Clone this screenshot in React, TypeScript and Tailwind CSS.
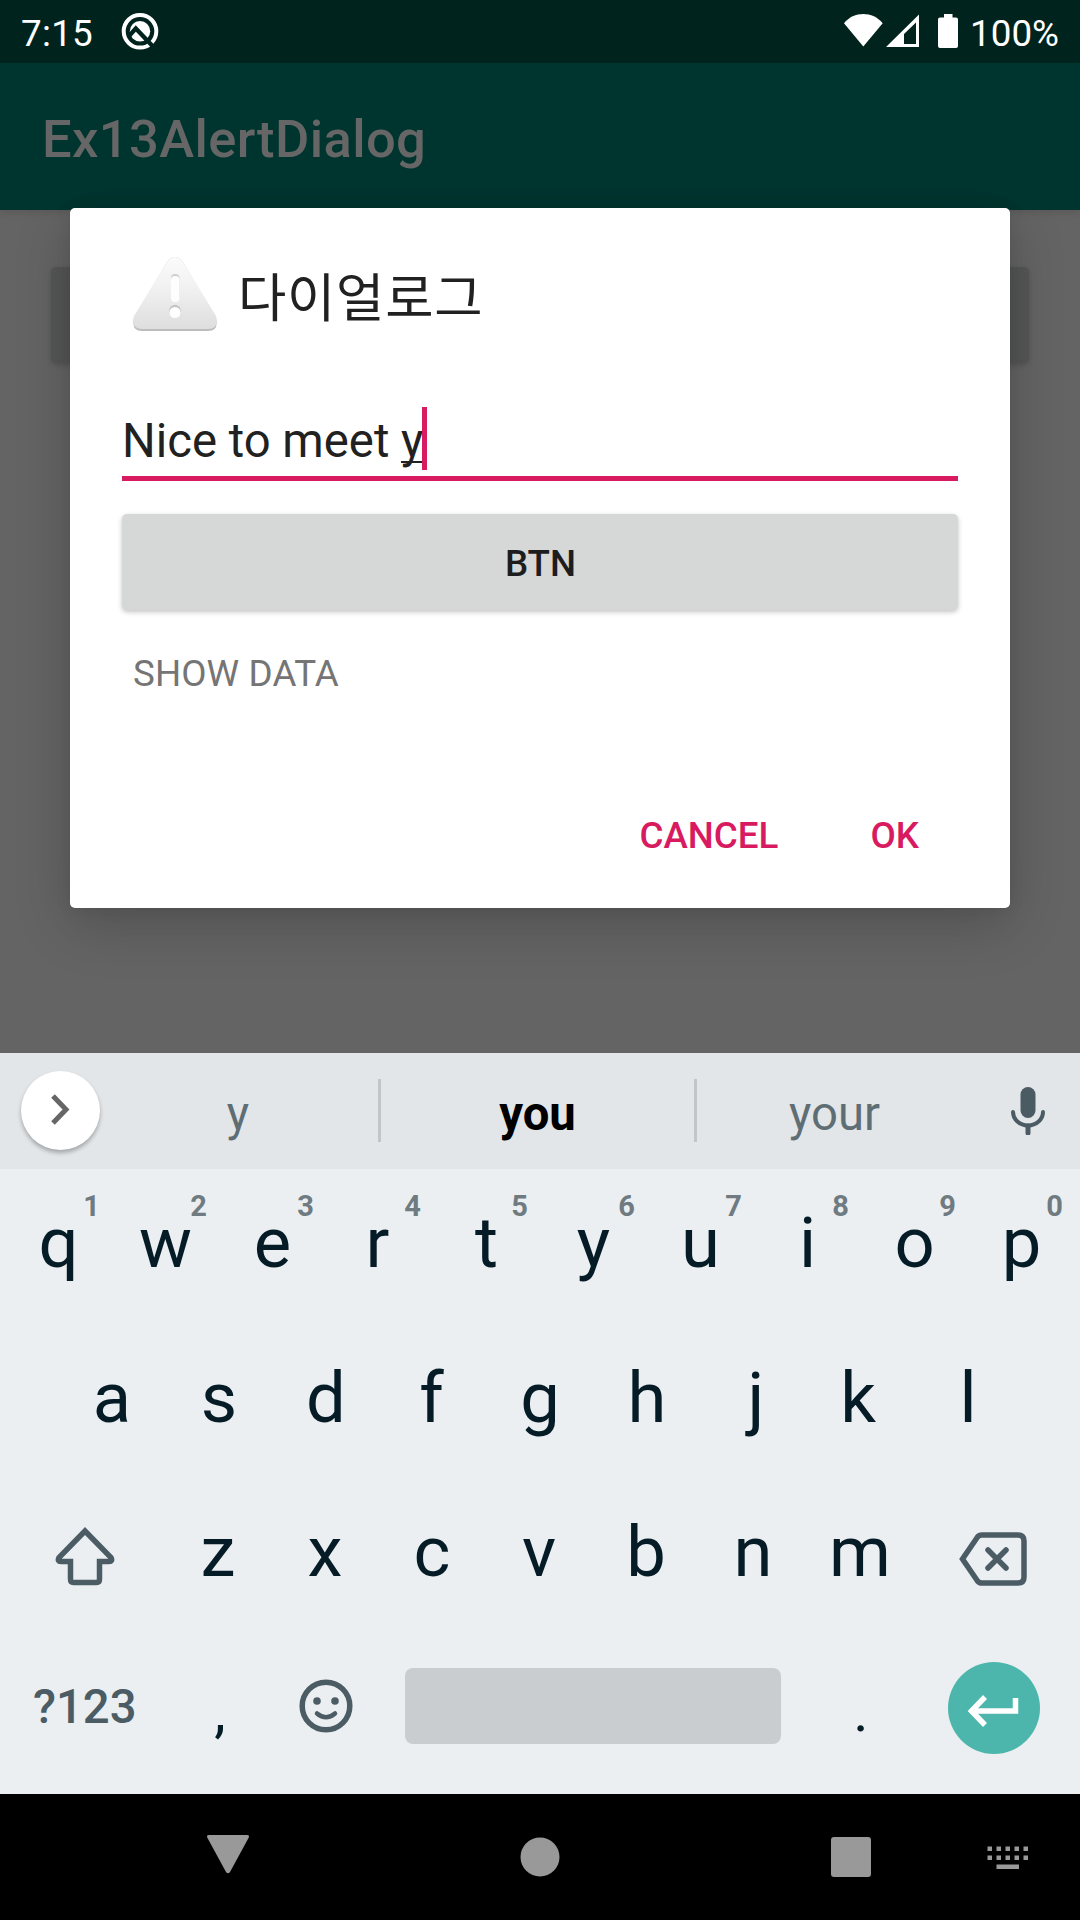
import React from "react";

const row1 = ["q", "w", "e", "r", "t", "y", "u", "i", "o", "p"];
const row2 = ["a", "s", "d", "f", "g", "h", "j", "k", "l"];
const row3 = ["z", "x", "c", "v", "b", "n", "m"];

const nudges: Record<string, string> = {
  r: "pr-[4px]",
  f: "pr-[3px]",
  j: "pl-[4px]",
  k: "pr-[6px]",
  ",": "pl-[4px]",
  ".": "pl-[2px]",
};

function Key({ label, hint, punctuation }: { label: string; hint?: string; punctuation?: boolean }) {
  return (
    <button
      className={`relative h-full w-[107px] text-center text-[#051c26] ${
        punctuation ? "text-[58px] leading-[157px]" : "text-[70.5px] leading-[148px]"
      } ${nudges[label] ?? ""}`}
    >
      <span className="block h-full">{label}</span>
      {hint && (
        <span className="absolute right-[12px] top-[19px] text-[29px] leading-[36px] font-bold text-[#6f7b80]">{hint}</span>
      )}
    </button>
  );
}

function StatusBar() {
  return (
    <header className="flex h-[63px] items-start justify-between bg-[#00231e] px-[21px] text-[36.75px] leading-[67px] text-white">
      <div className="flex items-start">
        <span className="w-[72px] tracking-[0.3px]">7:15</span>
        <svg className="ml-[28px] mt-[13px]" width="38" height="38" viewBox="0 0 38 38" fill="none">
          <circle cx="19" cy="18.3" r="16.300" stroke="white" strokeWidth="4" />
          <circle cx="19" cy="18.3" r="10.200" fill="white" />
          <path d="M8 23L14.800 15.500L31.500 33" stroke="#00231e" strokeWidth="4.300" />
        </svg>
      </div>
      <div className="flex items-start">
        <svg className="mt-[13px]" width="116" height="36" viewBox="0 0 116 36" fill="white">
          <path d="M1 10.300C6 4 13 1 20.300 1S34.600 4 39.700 10.300L20.300 33.600Z" />
          <path fillRule="evenodd" d="M43 34L76 1.500V34ZM61 31H73V9.500L61 21Z" />
          <path d="M101 1h8.500v3.500H113a2 2 0 0 1 2 2V33a2 2 0 0 1-2 2H97a2 2 0 0 1-2-2V6.500a2 2 0 0 1 2-2h4Z" />
        </svg>
        <span className="ml-[11px]">100%</span>
      </div>
    </header>
  );
}

function WarningIcon() {
  return (
    <svg width="84" height="84" viewBox="0 0 84 84">
      <defs>
        <linearGradient id="warn" x1="0" y1="0" x2="0" y2="1">
          <stop offset="0" stopColor="#fbfbfb" />
          <stop offset="0.4" stopColor="#f2f2f2" />
          <stop offset="1" stopColor="#dedede" />
        </linearGradient>
      </defs>
      <path d="M34 10Q42 0 50 10L83 66Q86 79 75 79H9Q-2 79 1 66Z" fill="#bdbdbd" />
      <path d="M34 10Q42 0 50 10L83 64Q86 77 75 77H9Q-2 77 1 64Z" fill="url(#warn)" />
      <rect x="38" y="22" width="8.500" height="27" rx="4" fill="#cfcfcf" />
      <rect x="38" y="24" width="8.500" height="26" rx="4" fill="#fdfdfd" />
      <circle cx="42" cy="58.500" r="5.800" fill="#c4c4c4" />
      <circle cx="42" cy="60.500" r="5.500" fill="#ffffff" />
    </svg>
  );
}

function AlertDialog() {
  return (
    <section className="flex h-[700px] w-[940px] flex-col rounded-[5px] bg-white px-[52px] pt-[44px] shadow-[0_16px_56px_rgba(0,0,0,0.2),0_0_16px_rgba(0,0,0,0.08)]">
      <div className="flex h-[84px] items-center gap-[21px] pl-[11px]">
        <WarningIcon />
        <h2 className="font-['Noto_Sans_CJK_KR',sans-serif] text-[52.5px] leading-[84px] tracking-[0.75px] text-[#212121]">
          다이얼로그
        </h2>
      </div>
      <div className="mt-[71px] flex h-[74px] items-start border-b-[5px] border-[#d81b60] text-[47.25px] leading-[69px] text-[#212121]">
        <span className="whitespace-pre">Nice to meet </span>
        <span className="h-[56px] border-b-[2px] border-[#212121]">y</span>
        <span className="-ml-px h-[63px] w-[5px] bg-[#d81b60]" />
      </div>
      <button className="mt-[33px] h-[96px] rounded-[5px] bg-[#d6d7d7] pl-[1px] pt-[3px] text-[36.75px] font-medium text-[#1d1d1d] shadow-[0_2px_5px_rgba(0,0,0,0.24)]">
        BTN
      </button>
      <p className="mt-[42px] pl-[11px] text-[36.75px] leading-[44px] tracking-[0.1px] text-[#757575]">SHOW DATA</p>
      <div className="mt-[118px] flex justify-end gap-[92px] pr-[39px] text-[36.75px] leading-[44px] font-medium text-[#d81b60]">
        <button>CANCEL</button>
        <button>OK</button>
      </div>
    </section>
  );
}

function SuggestionBar() {
  return (
    <div className="flex h-[116px] items-center bg-[#e2e6e9] pb-[2px] text-[47.25px] text-[#5f6d74]">
      <button className="ml-[21px] flex h-[79px] w-[79px] items-center justify-center rounded-full bg-white pl-[2px] shadow-[0_3px_4px_rgba(0,0,0,0.28)]">
        <svg width="30" height="40" viewBox="0 0 30 40" fill="none" stroke="#666" strokeWidth="5">
          <path d="M6 6L19 19.500L6 33" />
        </svg>
      </button>
      <span className="w-[278px] pr-[2px] pt-[8px] text-center">y</span>
      <span className="h-[63px] w-[3px] bg-[#c1c6c9]" />
      <span className="w-[313px] pt-[8px] text-center font-bold text-black">you</span>
      <span className="h-[63px] w-[3px] bg-[#c1c6c9]" />
      <span className="w-[275px] pt-[8px] text-center">your</span>
      <svg className="ml-[39px] mt-[1px]" width="34" height="48" viewBox="0 0 34 48" fill="none" stroke="#4b5b63">
        <rect x="9.500" y="0" width="15" height="31" rx="7.500" fill="#4b5b63" stroke="none" />
        <path d="M2 25a15 13.500 0 0 0 30 0" strokeWidth="4" strokeLinecap="round" />
        <path d="M17 39V46" strokeWidth="5" strokeLinecap="round" />
      </svg>
    </div>
  );
}

function Keyboard() {
  return (
    <div className="h-[741px] bg-[#ebeff2]">
      <SuggestionBar />
      <div className="flex h-[154.5px] justify-center">
        {row1.map((k, i) => (
          <Key key={k} label={k} hint={String((i + 1) % 10)} />
        ))}
      </div>
      <div className="flex h-[154.5px] justify-center">
        {row2.map((k) => (
          <Key key={k} label={k} />
        ))}
      </div>
      <div className="flex h-[154.5px] justify-center pr-[2px]">
        <button className="flex w-[160.5px] justify-center pt-[49px]">
          <svg width="60" height="60" viewBox="0 0 60 60" fill="none" stroke="#4b5c64" strokeWidth="5.500" className="ml-[1px]">
            <path d="M30 4L56 30.500Q58 34.500 54 34.500H44.500V52Q44.500 55.500 41.500 55.500H18.500Q15.500 55.500 15.500 52V34.500H6Q2 34.500 4 30.500Z" />
          </svg>
        </button>
        {row3.map((k) => (
          <Key key={k} label={k} />
        ))}
        <button className="flex w-[160.5px] justify-center pt-[54px]">
          <svg width="68" height="54" viewBox="0 0 68 54" fill="none" stroke="#4b5c64" strokeWidth="5.500" className="mr-[1px]">
            <path d="M23 3H59Q65 3 65 9V45Q65 51 59 51H23Q20 51 18.500 49L3.500 27L18.500 5Q20 3 23 3Z" />
            <path d="M29 18L47 36M47 18L29 36" strokeLinecap="round" />
          </svg>
        </button>
      </div>
      <div className="flex h-[154.5px] justify-center pr-[2px]">
        <button className="h-[149px] w-[160.5px] pl-[1px] text-center text-[47.25px] font-medium text-[#4b5c64]">?123</button>
        <Key label="," punctuation />
        <button className="flex h-[147px] w-[107px] items-center justify-center pl-[2px]">
          <svg width="54" height="54" viewBox="0 0 54 54" fill="none" stroke="#4b5c64">
            <circle cx="27" cy="27" r="23.800" strokeWidth="5.500" />
            <circle cx="18" cy="22" r="3.800" fill="#4b5c64" stroke="none" />
            <circle cx="36" cy="22" r="3.800" fill="#4b5c64" stroke="none" />
            <path d="M18 34.500Q27 42 36 34.500" strokeWidth="4.500" strokeLinecap="round" />
          </svg>
        </button>
        <div className="flex h-[147px] w-[428px] items-center justify-center">
          <button className="h-[76px] w-[376px] rounded-[8px] bg-[#c9cdd0]" />
        </div>
        <Key label="." punctuation />
        <button className="flex h-[151px] w-[160.5px] items-center justify-center">
          <svg width="92" height="92" viewBox="0 0 92 92" fill="none">
            <circle cx="46" cy="46" r="46" fill="#4db6ac" />
            <path d="M67.500 36V49H24M37 35L23.500 49L37 63" stroke="white" strokeWidth="5.500" />
          </svg>
        </button>
      </div>
    </div>
  );
}

function NavigationBar() {
  return (
    <nav className="flex h-[126px] bg-black pt-[41px]">
      <svg className="ml-[207px]" width="42" height="40" viewBox="0 0 42 40" fill="#999">
        <path d="M2 0H40Q43 0 41.500 3L23 37Q21 39.500 19 37L0.500 3Q-1 0 2 0Z" />
      </svg>
      <svg className="ml-[271px] mt-[2px]" width="40" height="40" viewBox="0 0 40 40" fill="#999">
        <circle cx="20" cy="20" r="19.500" />
      </svg>
      <span className="ml-[271px] mt-[2px] h-[40px] w-[40px] rounded-[3px] bg-[#999]" />
      <svg className="ml-[116px] mt-[11px]" width="42" height="24" viewBox="0 0 42 24" fill="#999">
        {[0, 9, 18, 27, 36].map((x) => (
          <React.Fragment key={x}>
            <rect x={x + 0.5} y="0.500" width="4.500" height="4.500" />
            <rect x={x + 0.5} y="9.500" width="4.500" height="4.500" />
          </React.Fragment>
        ))}
        <rect x="9.500" y="18.500" width="22.500" height="4.500" />
      </svg>
    </nav>
  );
}

export default function App() {
  return (
    <div className="flex h-[1920px] w-[1080px] flex-col overflow-hidden font-['Roboto',sans-serif]">
      <StatusBar />
      <main className="relative h-[990px] overflow-hidden bg-[#646464]">
        <div className="flex h-[147px] items-center bg-[#00352f] pl-[42px] pt-[4px] shadow-[0_2px_8px_rgba(0,0,0,0.12)]">
          <h1 className="text-[52.5px] leading-[62px] font-medium tracking-[0.4px] text-[#666]">Ex13AlertDialog</h1>
        </div>
        <div className="mx-[51px] mt-[57px] h-[96px] rounded-[5px] bg-[#555656] shadow-[0_2px_5px_rgba(0,0,0,0.16)]" />
        <div className="absolute inset-0 flex items-center justify-center">
          <AlertDialog />
        </div>
      </main>
      <Keyboard />
      <NavigationBar />
    </div>
  );
}
